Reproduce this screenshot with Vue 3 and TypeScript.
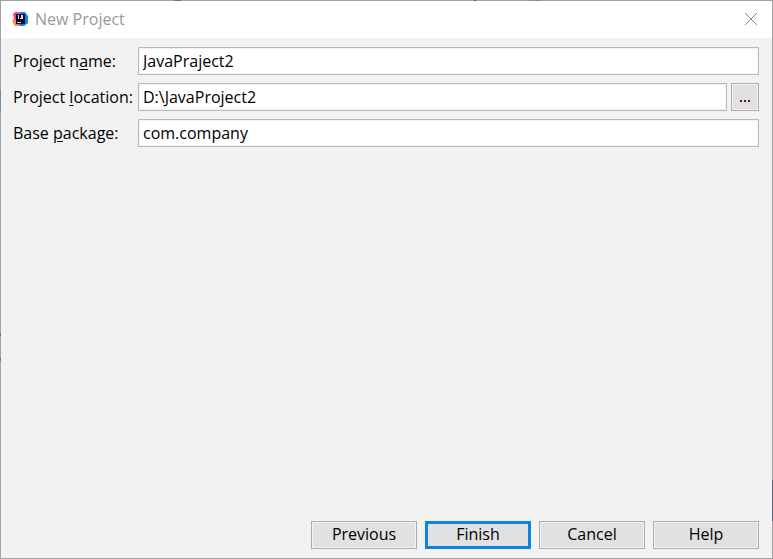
<script setup lang="ts">
import { ref } from 'vue'

const projectName = ref('JavaPraject2')
const projectLocation = ref('D:\\JavaProject2')
const basePackage = ref('com.company')

const actions: { label: string; primary?: boolean }[] = [
  { label: 'Previous' },
  { label: 'Finish', primary: true },
  { label: 'Cancel' },
  { label: 'Help' },
]
</script>

<template>
  <div class="window">
    <header class="titlebar">
      <svg class="logo" viewBox="0 0 16 16" aria-hidden="true">
        <path d="M1 3 3 1h5v13l-4 1-2-2-1-3 1-3z" fill="#f2456c" />
        <path d="M0 9l3-1 3 7H3l-2-3z" fill="#f98a62" />
        <path d="M5 1h4v3H5z" fill="#9a6be0" />
        <path d="M9 1h4l3 4v7l-4 3H7l2-4z" fill="#0b84f0" />
        <path d="M4 3h9v10H4z" fill="#0a0820" />
        <path d="M6 4h1v4H6zM9 4h2v4H8V7h1zM5 11h4v1H5z" fill="#d8d8e4" />
      </svg>
      <h1 class="title">New Project</h1>
      <button class="close" type="button" aria-label="Close">
        <svg viewBox="0 0 12 12" width="12" height="12" aria-hidden="true">
          <path d="M0 0l12 12M12 0L0 12" stroke="#888" stroke-width="1" />
        </svg>
      </button>
    </header>

    <form class="body" @submit.prevent>
      <div class="fields">
        <label for="name">Project n<u>a</u>me:</label>
        <input id="name" v-model="projectName" class="field" type="text" spellcheck="false" />

        <label for="location">Project <u>l</u>ocation:</label>
        <div class="picker">
          <input id="location" v-model="projectLocation" class="field" type="text" spellcheck="false" />
          <button class="btn browse" type="button" aria-label="Browse">
            <svg viewBox="0 0 10 2" width="10" height="2" aria-hidden="true">
              <path d="M0 0h2v2H0zM4 0h2v2H4zM8 0h2v2H8z" fill="#531a24" />
            </svg>
          </button>
        </div>

        <label for="package">Base <u>p</u>ackage:</label>
        <input id="package" v-model="basePackage" class="field" type="text" spellcheck="false" />
      </div>

      <footer class="actions">
        <button
          v-for="action in actions"
          :key="action.label"
          class="btn"
          :class="{ primary: action.primary }"
          type="button"
        >
          {{ action.label }}
        </button>
      </footer>
    </form>
  </div>
</template>

<style>
body {
  background: #f2f2f2;
}
</style>

<style scoped>
.window {
  box-sizing: border-box;
  min-height: 100vh;
  display: flex;
  flex-direction: column;
  padding: 1px;
  background:
    linear-gradient(#3a86b0, #3a86b0) 174px 0 / 7px 1px no-repeat,
    linear-gradient(#7f8a9c, #7f8a9c) 529px 0 / 12px 1px no-repeat,
    linear-gradient(#8a3a20, #8a3a20) 474px 0 / 2px 1px no-repeat,
    linear-gradient(#3a86b0, #3a86b0) 0 333px / 1px 3px no-repeat,
    linear-gradient(#3a86b0, #3a86b0) 0 358px / 1px 3px no-repeat,
    linear-gradient(#7f8a9c, #7f8a9c) 0 90px / 1px 21px no-repeat,
    linear-gradient(#56627c, #56627c) 100% 480px / 1px 41px no-repeat,
    #a3a3a3;
  color: #000;
  font-family: "Open Sans", "Noto Sans", sans-serif;
  font-size: 16px;
  line-height: 20px;
}

.titlebar {
  display: flex;
  align-items: center;
  gap: 7px;
  box-sizing: border-box;
  height: 37px;
  padding: 0 15px 1px 11px;
  background: #fff;
}

.logo {
  width: 16px;
  height: 16px;
}

.title {
  flex: 1;
  margin: 0;
  font-size: 16px;
  font-weight: 400;
  color: #999;
}

.close {
  display: flex;
  padding: 0;
  border: 0;
  background: none;
}

.body {
  flex: 1;
  display: flex;
  flex-direction: column;
  justify-content: space-between;
  padding: 9px 13px 9px 12px;
  background: #f2f2f2;
}

.fields {
  display: grid;
  grid-template-columns: 119px 1fr;
  align-items: center;
  gap: 8px 6px;
}

label {
  white-space: nowrap;
}

u {
  text-decoration-thickness: 1px;
  text-underline-offset: 2px;
}

.picker {
  display: flex;
  gap: 4px;
}

.field {
  box-sizing: border-box;
  flex: 1;
  width: 100%;
  min-width: 0;
  height: 28px;
  padding: 0 4px;
  border: 1px solid #bababa;
  border-radius: 0;
  outline: 0;
  background: #fff;
  box-shadow: inset 0 0 0 1px #f2f2f2;
  color: inherit;
  font: inherit;
}

.btn {
  box-sizing: border-box;
  width: 106px;
  height: 28px;
  padding: 0 0 2px;
  border: 1px solid #adadad;
  background: #e1e1e1;
  box-shadow: inset 0 0 0 1px #f2f2f2;
  color: inherit;
  font: inherit;
}

.browse {
  display: flex;
  justify-content: center;
  align-items: flex-end;
  width: 28px;
  padding-bottom: 8px;
}

.primary {
  border: 3px solid #0a84de;
  box-shadow: none;
}

.actions {
  display: flex;
  justify-content: flex-end;
  gap: 8px;
}
</style>
